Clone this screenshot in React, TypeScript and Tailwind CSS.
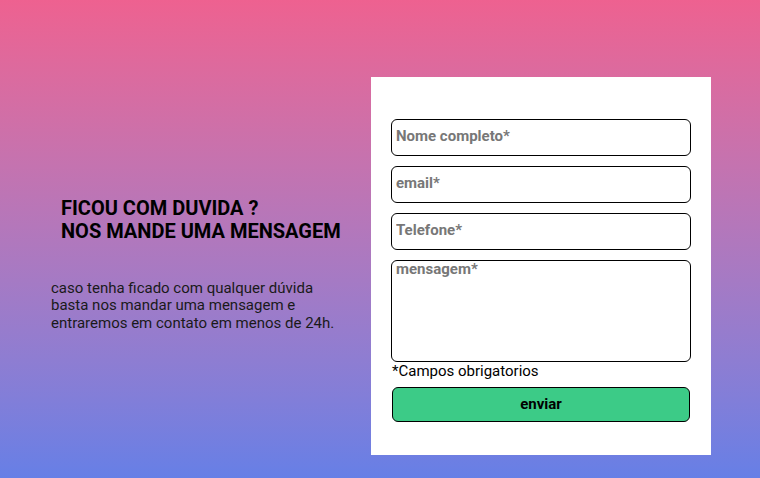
import React from "react";

const inputClass =
  "h-[37px] w-full rounded-md border border-black bg-white px-1 pb-[3px] text-[15px] font-bold text-black placeholder:text-[#777777] outline-none";

export default function App() {
  return (
    <div
      className="flex h-[478px] w-full items-start bg-gradient-to-b from-[#ee6190] to-[#667fe6] pt-[77px]"
      style={{ fontFamily: "Roboto, 'Liberation Sans', sans-serif" }}
    >
      <div className="flex items-center">
        <div className="mb-[3px] flex w-[371px] shrink-0 flex-col pl-[51px]">
          <h1 className="ml-[10px] text-[20px] font-bold leading-[23px] text-black">
            FICOU COM DUVIDA ?
            <br />
            NOS MANDE UMA MENSAGEM
          </h1>
          <p className="mt-[37px] whitespace-nowrap text-[15px] leading-[17.5px] text-[#1a1a1a]">
            caso tenha ficado com qualquer dúvida
            <br />
            basta nos mandar uma mensagem e
            <br />
            entraremos em contato em menos de 24h.
          </p>
        </div>
        <form className="flex h-[378px] w-[340px] shrink-0 flex-col bg-white px-5 pt-[42px]">
          <div className="flex flex-col gap-[10px]">
            <input className={inputClass} placeholder="Nome completo*" />
            <input className={inputClass} placeholder="email*" />
            <input className={inputClass} placeholder="Telefone*" />
            <textarea
              className="h-[102px] w-full resize-none rounded-md border border-black bg-white px-1 text-[15px] font-bold leading-[16px] text-black placeholder:text-[#777777] outline-none"
              placeholder="mensagem*"
            />
          </div>
          <span className="pl-[1px] text-[15px] leading-[18px] text-black">
            *Campos obrigatorios
          </span>
          <button
            type="button"
            className="mx-[1px] mt-[7px] h-[35px] rounded-md border border-black bg-[#3ccb87] text-[15px] font-bold text-black"
          >
            enviar
          </button>
        </form>
      </div>
    </div>
  );
}
